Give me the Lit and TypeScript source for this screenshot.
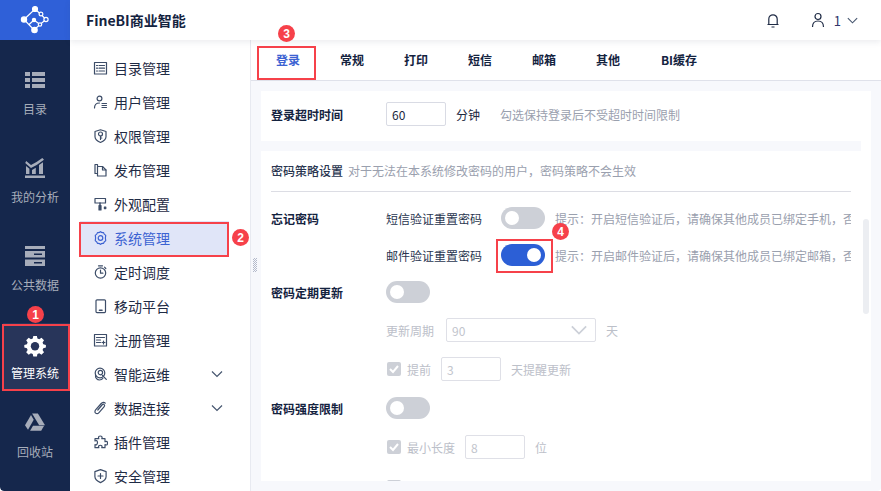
import { LitElement, html, css, svg } from "lit";
import { customElement } from "lit/decorators.js";

const S = (p: unknown, size = 16, cls = "") =>
  html`<svg class=${cls} width=${size} height=${size} viewBox="0 0 16 16" fill="none" stroke="currentColor" stroke-width="1.2" stroke-linecap="round" stroke-linejoin="round">${p}</svg>`;

const navIcons: Record<string, unknown> = {
  list: svg`<rect x="2.5" y="2.500" width="12" height="11.500" /><path d="M4.500 5.500h1M7 5.500h5.500M4.500 8.200h1M7 8.200h5.500M4.500 11h1M7 11h5.500"/>`,
  user: svg`<circle cx="7.500" cy="4.500" r="2.400"/><path d="M2.500 14c0-3.400 2-5 5-5"/><path d="M10 9.500h4.500M10 11.500h4.500M10 13.500h4.500"/>`,
  shield: svg`<path d="M8.500 1.800l5.500 1.700v5.200c0 2.800-2.400 4.500-5.500 5.800-3.100-1.300-5.500-3-5.500-5.800V3.500z"/><circle cx="8.500" cy="6" r="2"/><path d="M8.500 8v3.500M8.500 10h1.300"/>`,
  doc: svg`<path d="M5.500 4V2.500H3v9h2.500"/><path d="M5.500 4.500h5l3.500 3.500v6H5.500z"/><path d="M10.500 4.500V8H14"/>`,
  paint: svg`<path d="M3 2.500h10.500v4.500H3z"/><path d="M8 7v2.500" stroke-width="1.500"/><path d="M7 9.500h2v4.500H7z" fill="currentColor"/><path d="M12.400 11h1.400v1.600h-1.400z" fill="currentColor"/>`,
  gear: svg`<path d="M8.500 1.700c.9 1 2.100 1.100 3 .9.300 1.100.9 2.100 2.200 2.700-.4 1.800-.4 3.600 0 5.400-1.300.6-1.900 1.600-2.200 2.700-1-.2-2.100-.1-3 .9-.9-1-2-1.100-3-.9-.3-1.100-.9-2.100-2.200-2.700.4-1.800.4-3.600 0-5.400 1.300-.6 1.900-1.600 2.200-2.700 1 .2 2.100.1 3-.9z"/><circle cx="8.500" cy="8" r="2.300"/>`,
  clock: svg`<circle cx="8.500" cy="9" r="5.200"/><path d="M8.500 6v3.200h2.400M6.500 1.800h4M12.500 3.200l1.300 1.300"/>`,
  phone: svg`<rect x="4" y="1.800" width="9.500" height="12.800" rx="1"/><path d="M7.500 12.300h2.500" stroke-width="1.600"/>`,
  reg: svg`<rect x="2.500" y="2.500" width="12" height="11.500"/><path d="M4.500 5.500h8M4.500 8h4M4.500 10.500h4M10 10.500h3M11.500 9v3"/>`,
  ops: svg`<circle cx="8" cy="7" r="4.800"/><circle cx="8.400" cy="6.600" r="2.200"/><path d="M3.500 9.500c-.2 2.500 1.600 4.500 4 4.500 1.500 0 2.600-.6 3.400-1.600M10.500 9.500l3.800 3.800"/>`,
  clip: svg`<path d="M13.300 3.200c-1.200-1.200-2.900-1-4.100.3L3.800 9.600c-1 1.100-1.200 2.700-.2 3.500 1 .9 2.400.6 3.400-.5l5-5.700c.7-.8.8-1.700.2-2.300-.6-.6-1.500-.3-2.200.4L5.800 10"/>`,
  puzzle: svg`<path d="M6.500 3.200c0-1.600 3.600-1.600 3.600 0 0 .7-.3 1-.3 1.500H13v3c.6 0 1-.3 1.500-.3 1.300 0 1.300 3.600 0 3.600-.5 0-.9-.3-1.500-.3v3H9.800c0-.7.3-1 .3-1.400 0-1.400-3.600-1.400-3.600 0 0 .4.3.7.3 1.400H3v-3c.8 0 1.200.3 1.600.1 1.200-.9 1.200-3.800-.1-4.100-.5-.1-.9.2-1.500.2V4.700h3.800c0-.5-.3-.8-.3-1.500z"/>`,
  safe: svg`<path d="M8.500 1.600l5.600 2v5c0 2.900-2.400 4.700-5.600 6-3.200-1.300-5.600-3.100-5.600-6v-5z"/><path d="M6 8h5M8.500 5.500v5"/>`,
};

const nav: [string, string, boolean?][] = [
  ["list", "目录管理"], ["user", "用户管理"], ["shield", "权限管理"], ["doc", "发布管理"], ["paint", "外观配置"],
  ["gear", "系统管理"], ["clock", "定时调度"], ["phone", "移动平台"], ["reg", "注册管理"],
  ["ops", "智能运维", true], ["clip", "数据连接", true], ["puzzle", "插件管理"], ["safe", "安全管理"],
];

const rail = [
  { label: "目录", cls: "r1", icon: svg`<svg width="20" height="16" viewBox="0 0 20 16" fill="currentColor"><path d="M0 0h5v4H0zM7 0h13v4H7zM0 6h5v4H0zM7 6h13v4H7zM0 12h5v4H0zM7 12h13v4H7z"/></svg>` },
  { label: "我的分析", cls: "r2", icon: svg`<svg width="20" height="20" viewBox="0 0 20 20" fill="currentColor"><path d="M1.200 3l4.800 4 5.500-3 5.800-4L19 1.800 11.700 7 6 10 .2 5z"/><path d="M1 8l3.400 2.800V16H1zM7 12l3.800-2.200V16H7zM14 7l4-2.800V16h-4zM0 17.500h20V20H0z"/></svg>` },
  { label: "公共数据", cls: "r3", icon: svg`<svg width="20" height="20" viewBox="0 0 20 20" fill="currentColor"><path d="M0 0h20v3H0zM0 5h20v6.500H0zM0 13.500h20V20H0z"/><path d="M9 7.500h8v1.500H9zM9 16h8v1.500H9z" fill="#15274c"/></svg>` },
  { label: "管理系统", cls: "r4 on", icon: svg`<svg width="22" height="22" viewBox="0 0 22 22"><path fill="currentColor" d="M9 0h4l.6 2.900 2 .8L18.100 2.100l2.800 2.800-1.600 2.500.8 2L23 10v3l-2.900.6-.8 2 1.600 2.500-2.800 2.800-2.500-1.600-2 .8L13 23H9l-.6-2.900-2-.8-2.500 1.600-2.800-2.800 1.600-2.500-.8-2L-1 13v-3l2.900-.6.8-2L1.100 4.900l2.800-2.800 2.500 1.600 2-.8z" transform="translate(1.200 .9) scale(.9)"/><circle cx="11" cy="11.300" r="4.200" fill="#28355a"/></svg>` },
  { label: "回收站", cls: "r5", icon: svg`<svg width="20" height="19" viewBox="0 0 22 20" fill="currentColor"><path d="M7.800 0h6.400l7.800 13h-6.400z"/><path d="M6.600 1.800l3 5.200L3.300 18 0 13z"/><path d="M5.600 19l3.200-5.500H21L17.800 19z"/></svg>` },
];

@customElement("app-root")
export class AppRoot extends LitElement {
  static styles = css`
    :host { display: block; width: 881px; height: 491px; position: relative; overflow: hidden;
      font-family: "Noto Sans CJK SC", "Liberation Sans", sans-serif; font-size: 12px; color: #1c2840; background: #fff; }
    * { box-sizing: border-box; }
    .app { display: flex; height: 491px; border-radius: 0 0 4px 4px; overflow: hidden; background: #f7f8fc; }
    .rail { width: 70px; flex: none; background: #15274c; color: #a7adba; display: flex; flex-direction: column; border-bottom-left-radius: 4px; }
    .logo { height: 40px; background: #2f60d8; display: flex; align-items: center; justify-content: center; color: #fff; }
    .ri { display: flex; flex-direction: column; align-items: center; justify-content: flex-end; line-height: 16px; }
    .ri span { white-space: nowrap; }
    .r1 { height: 77px; } .r1 span { margin-top: 13px; }
    .r2 { height: 88px; } .r2 span { margin-top: 11px; }
    .r3 { height: 88px; } .r3 span { margin-top: 11px; }
    .r4 { height: 66px; margin: 30px 0 0 3px; padding: 0 3px 8px 0; background: #28355a; color: #fff; }
    .r4 span { margin-top: 8px; }
    .r5 { height: 71px; } .r5 span { margin-top: 12px; }
    .main { flex: 1; display: flex; flex-direction: column; min-width: 0; }
    .top { height: 40px; flex: none; background: #fff; display: flex; align-items: center; padding: 0 22px 0 16px;
      box-shadow: 0 2px 6px rgba(60, 70, 100, 0.1); position: relative; z-index: 2; }
    .title { font-size: 14px; font-weight: 700; color: #14233f; flex: 1; }
    .bell { color: #1f2b45; display: flex; margin-right: 29px; }
    .usr { color: #1f2b45; display: flex; margin-right: 8px; }
    .num { font-size: 13px; margin-right: 5px; color: #33356a; }
    .chev { color: #46566f; display: flex; }
    .body { flex: 1; display: flex; min-height: 0; }
    .side { width: 181px; flex: none; background: #fff; padding: 11px 21px 0 10px; border-right: 1px solid #e8eaf1; overflow: hidden; }
    .nv { height: 34px; display: flex; align-items: center; padding: 0 5px 0 12px; font-size: 14px; color: #1f2b45; }
    .nv svg.ic { margin-right: 6px; color: #3d4d68; flex: none; }
    .nv .tx { flex: 1; }
    .nv.on { background: #e0e5f8; color: #3c62d2; }
    .nv.on svg.ic { color: #3c62d2; }
    .nv .ar { color: #46566f; display: flex; }
    .grip { position: absolute; left: 2px; top: 218px; width: 4px; height: 14px;
      background: repeating-conic-gradient(#b4bacb 0 25%, transparent 0 50%) 0 0 / 2px 2px; }
    .content { flex: 1; min-width: 0; display: flex; flex-direction: column; position: relative; }
    .tabs { height: 41px; flex: none; background: #fff; border-bottom: 1px solid #dfe1ea; display: flex; padding-left: 5px; }
    .tab { width: 64px; display: flex; align-items: center; justify-content: center; font-weight: 700; color: #14233f; padding-bottom: 2px; }
    .tab.on { color: #3c62d2; }
    .tab.w { width: 78px; }
    .pane { margin: 10px; flex: 1; background: #fff; display: flex; flex-direction: column; min-height: 0; overflow: hidden; position: relative; }
    .first { height: 50px; flex: none; display: flex; align-items: center; padding: 0 0 4px 10px; }
    .lb { width: 115px; flex: none; font-weight: 700; color: #14233f; }
    .inp { border: 1px solid #d9dbe4; border-radius: 2px; height: 24px; width: 60px; padding-left: 5px; display: flex; align-items: center; font-size: 12px; color: #1c2840; background: #fff; flex: none; }
    .unit { margin-left: 10px; }
    .hint { color: #9aa0ae; }
    .first .hint { margin-left: 20px; }
    .band { height: 10px; flex: none; background: #f7f8fc; margin-right: 10px; }
    .sec { flex: 1; padding: 0 20px 0 10px; min-height: 0; }
    .shead { height: 41px; border-bottom: 1px solid #dcdde4; display: flex; align-items: center; white-space: nowrap; padding-bottom: 1px; }
    .shead b { font-weight: 500; color: #2a3650; margin-right: 5px; }
    .row { display: flex; align-items: center; height: 38px; white-space: nowrap; }
    .row.f { margin-top: 7px; }
    .row.h36 { height: 36px; } .row.h40 { height: 40px; }
    .ctl { width: 115px; flex: none; }
    .sw { width: 44px; height: 22px; border-radius: 11px; background: #cdd0d7; display: flex; align-items: center; padding: 0 4px; flex: none; }
    .sw i { width: 14px; height: 14px; border-radius: 50%; background: #fff; display: block; }
    .sw.on { background: #2c5fd6; justify-content: flex-end; }
    .lbl2 { width: 115px; flex: none; color: #2a3650; }
    .row .hint.tip { margin-left: 10px; width: 296px; overflow: hidden; flex: none; }
    .dim { color: #bcc0c9; }
    .inp.dis { color: #c2c5cd; border-color: #dfe0e7; }
    .sel { width: 150px; margin-left: 12px; justify-content: space-between; padding-right: 6px; }
    .sel svg { color: #ccd0d8; }
    .cb { width: 14px; height: 14px; border-radius: 2px; background: #cdd0d7; display: flex; align-items: center; justify-content: center; flex: none; margin: 0 6px 0 1px; color: #fff; }
    .gap10 { margin-left: 10px; }
    .track { position: absolute; left: 602px; top: 128px; width: 6px; height: 95px; border-radius: 3px; background: #eceef2; }
    .ann { position: absolute; border: 2px solid #f6414a; pointer-events: none; z-index: 5; }
    .badge { position: absolute; width: 17px; height: 17px; border-radius: 50%; background: #f6414a; color: #fff; font-size: 12px; font-weight: 700; display: flex; align-items: center; justify-content: center; z-index: 6; font-family: "Liberation Sans", sans-serif; line-height: 1; }
    .a1 { left: 2px; top: 324px; width: 68px; height: 67px; }
    .a2 { left: 79px; top: 222px; width: 150px; height: 35px; }
    .a3 { left: 257px; top: 46px; width: 59px; height: 34px; }
    .a4 { left: 496px; top: 239px; width: 57px; height: 34px; }
    .b1 { left: 27px; top: 306px; } .b2 { left: 232px; top: 229px; } .b3 { left: 278px; top: 25px; } .b4 { left: 552px; top: 223px; }
  `;

  chevron(size = 14) {
    return html`<svg width=${size} height=${size} viewBox="0 0 14 14" fill="none" stroke="currentColor" stroke-width="1.200"><path d="M2 4.500l5 5 5-5"/></svg>`;
  }

  check() {
    return html`<span class="cb"><svg width="12" height="12" viewBox="0 0 12 12" fill="none" stroke="currentColor" stroke-width="2"><path d="M2 6l3 3 5-6"/></svg></span>`;
  }

  render() {
    return html`
      <div class="app">
        <aside class="rail">
          <div class="logo">
            <svg width="30" height="30" viewBox="20 5 30 30" fill="none" stroke="#fff" stroke-width="1.200">
              <path d="M24 19.500L35 9l6 5.500 5 5-6 5-6 5.500-10-10.500zM28.500 25L34 20l6 4.500"/>
              <circle cx="24" cy="19.500" r="2.600" fill="#fff"/><circle cx="35" cy="9" r="2.500" fill="#fff"/>
              <circle cx="34.500" cy="30" r="2.700" fill="#fff"/><circle cx="34" cy="20" r="1.600" fill="#fff"/>
              <circle cx="41" cy="14" r="1.900" fill="#2f60d8"/><circle cx="46" cy="19.500" r="2.100" fill="#2f60d8"/><circle cx="40" cy="24.500" r="1.700" fill="#2f60d8"/>
            </svg>
          </div>
          ${rail.map((r) => html`<div class="ri ${r.cls}">${r.icon}<span>${r.label}</span></div>`)}
        </aside>
        <div class="main">
          <header class="top">
            <div class="title">FineBI商业智能</div>
            <span class="bell"><svg width="16" height="16" viewBox="0 0 16 16" fill="none" stroke="currentColor" stroke-width="1.200"><path d="M2.500 12.500h11M3.800 12.500V7a4.200 4.200 0 0 1 8.400 0v5.500M6.500 15h3"/></svg></span>
            <span class="usr"><svg width="16" height="16" viewBox="0 0 16 16" fill="none" stroke="currentColor" stroke-width="1.200"><circle cx="8" cy="4.500" r="3"/><path d="M2.500 15c0-3.800 2-6 5.500-6s5.500 2.200 5.500 6"/></svg></span>
            <span class="num">1</span>
            <span class="chev">${this.chevron(13)}</span>
          </header>
          <div class="body">
            <nav class="side">
              ${nav.map(([ic, t, arrow]) => html`
                <div class="nv ${t === "系统管理" ? "on" : ""}">
                  ${S(navIcons[ic], 16, "ic")}
                  <span class="tx">${t}</span>
                  ${arrow ? html`<span class="ar">${this.chevron(14)}</span>` : ""}
                </div>`)}
            </nav>
            <section class="content">
              <div class="grip"></div>
              <div class="tabs">
                <div class="tab on">登录</div><div class="tab">常规</div><div class="tab">打印</div><div class="tab">短信</div>
                <div class="tab">邮箱</div><div class="tab">其他</div><div class="tab w">BI缓存</div>
              </div>
              <div class="pane">
                <div class="first">
                  <span class="lb">登录超时时间</span>
                  <span class="inp">60</span><span class="unit">分钟</span>
                  <span class="hint">勾选保持登录后不受超时时间限制</span>
                </div>
                <div class="band"></div>
                <div class="sec">
                  <div class="shead"><b>密码策略设置</b><span class="hint">对于无法在本系统修改密码的用户，密码策略不会生效</span></div>
                  <div class="row f"><span class="lb">忘记密码</span><span class="lbl2">短信验证重置密码</span><span class="sw"><i></i></span><span class="hint tip">提示：开启短信验证后，请确保其他成员已绑定手机，否则无法重置密码</span></div>
                  <div class="row h36"><span class="ctl"></span><span class="lbl2">邮件验证重置密码</span><span class="sw on"><i></i></span><span class="hint tip">提示：开启邮件验证后，请确保其他成员已绑定邮箱，否则无法重置密码</span></div>
                  <div class="row"><span class="lb">密码定期更新</span><span class="sw"><i></i></span></div>
                  <div class="row"><span class="ctl"></span><span class="dim">更新周期</span><span class="inp dis sel">90 ${this.chevron(20)}</span><span class="dim gap10">天</span></div>
                  <div class="row h40"><span class="ctl"></span>${this.check()}<span class="dim">提前</span><span class="inp dis gap10">3</span><span class="dim gap10">天提醒更新</span></div>
                  <div class="row"><span class="lb">密码强度限制</span><span class="sw"><i></i></span></div>
                  <div class="row h40"><span class="ctl"></span>${this.check()}<span class="dim">最小长度</span><span class="inp dis gap10">8</span><span class="dim gap10">位</span></div>
                  <div class="row h40"><span class="ctl"></span>${this.check()}<span class="dim">包含数字</span></div>
                </div>
                <div class="track"></div>
              </div>
            </section>
          </div>
        </div>
      </div>
      <div class="ann a1"></div><div class="ann a2"></div><div class="ann a3"></div><div class="ann a4"></div>
      <div class="badge b1">1</div><div class="badge b2">2</div><div class="badge b3">3</div><div class="badge b4">4</div>
    `;
  }
}
